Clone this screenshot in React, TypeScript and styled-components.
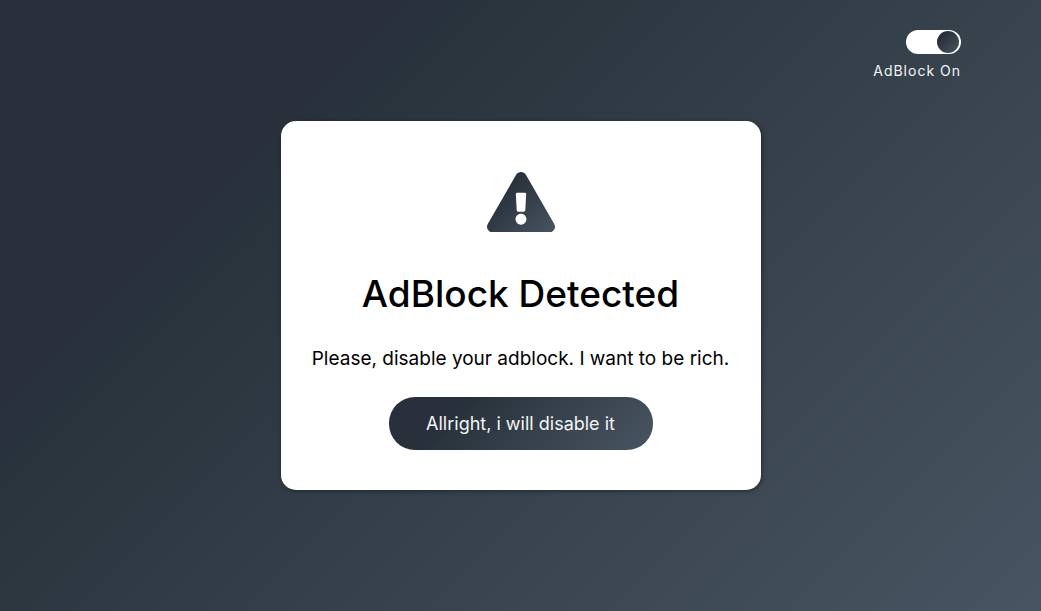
import React, { useState } from "react";
import styled, { createGlobalStyle } from "styled-components";

const slate = "linear-gradient(315deg, #485461 0%, #29343d 70%, #292f3b 77%)";

const GlobalStyle = createGlobalStyle`
  *, *::before, *::after { box-sizing: border-box; }
  body {
    margin: 0;
    font-family: Inter, "Noto Sans", sans-serif;
    color: #000;
  }
`;

const Page = styled.main`
  display: grid;
  grid-template: minmax(100vh, auto) / 1fr;
  background: ${slate};
`;

const SwitchGroup = styled.label`
  grid-area: 1 / 1;
  place-self: start end;
  display: flex;
  flex-direction: column;
  align-items: flex-end;
  gap: 6px;
  padding: 30px 80px 0 0;
  color: #f4f5f6;
  font-size: 14px;
  line-height: 22px;
  letter-spacing: 1px;
  cursor: pointer;
`;

const Switch = styled.input`
  appearance: none;
  display: flex;
  align-items: center;
  width: 55px;
  height: 24px;
  margin: 0;
  padding: 0 2px;
  border-radius: 12px;
  background: #fff;
  cursor: pointer;

  &::before {
    content: "";
    width: 22px;
    height: 22px;
    border-radius: 50%;
    background: ${slate};
  }

  &:checked {
    justify-content: flex-end;
  }
`;

const Card = styled.section`
  grid-area: 1 / 1;
  place-self: center;
  display: flex;
  flex-direction: column;
  align-items: center;
  width: 480px;
  max-width: 100%;
  padding: 51px 30px 40px;
  border-radius: 15px;
  background: #fff;
  box-shadow: 1px 1px 4px rgba(0, 0, 0, 0.4);
  text-align: center;
`;

const WarningIcon = styled.svg`
  width: 68px;
  height: 60px;
`;

const Title = styled.h1`
  margin: 34px 0 0;
  font-size: 37px;
  font-weight: 500;
  line-height: 56px;
`;

const Message = styled.p`
  margin: 23px 0 0;
  font-size: 19px;
  line-height: 28px;
`;

const Button = styled.button`
  margin-top: 24px;
  width: 264px;
  max-width: 100%;
  padding: 12px 0;
  border: 0;
  border-radius: 26px;
  background: ${slate};
  color: #f4f5f6;
  font: inherit;
  font-size: 18px;
  line-height: 29px;
  cursor: pointer;
`;

export default function App() {
  const [blocked, setBlocked] = useState(true);

  return (
    <>
      <GlobalStyle />
      <Page>
        <SwitchGroup>
          <Switch
            type="checkbox"
            checked={blocked}
            onChange={(e) => setBlocked(e.target.checked)}
          />
          <span>AdBlock {blocked ? "On" : "Off"}</span>
        </SwitchGroup>
        {blocked && (
          <Card>
            <WarningIcon viewBox="0 0 576 508" aria-hidden="true">
              <defs>
                <linearGradient id="slate" gradientUnits="userSpaceOnUse" x1="560" y1="528" x2="16" y2="-16">
                  <stop offset="0" stopColor="#485461" />
                  <stop offset="0.74" stopColor="#28313b" />
                </linearGradient>
              </defs>
              <path
                fill="url(#slate)"
                d="M569.517 440.013C587.975 472.007 564.806 512 527.94 512H48.054c-36.937 0-59.999-40.055-41.577-71.987L246.423 23.985c18.467-32.009 64.72-31.951 83.154 0l239.94 416.028zM288 354c-25.405 0-46 20.595-46 46s20.595 46 46 46 46-20.595 46-46-20.595-46-46-46zm-43.673-165.346l7.418 136c.347 6.364 5.609 11.346 11.982 11.346h48.546c6.373 0 11.635-4.982 11.982-11.346l7.418-136c.375-6.874-5.098-12.654-11.982-12.654h-63.383c-6.884 0-12.356 5.78-11.981 12.654z"
              />
            </WarningIcon>
            <Title>AdBlock Detected</Title>
            <Message>Please, disable your adblock. I want to be rich.</Message>
            <Button type="button" onClick={() => setBlocked(false)}>
              Allright, i will disable it
            </Button>
          </Card>
        )}
      </Page>
    </>
  );
}
